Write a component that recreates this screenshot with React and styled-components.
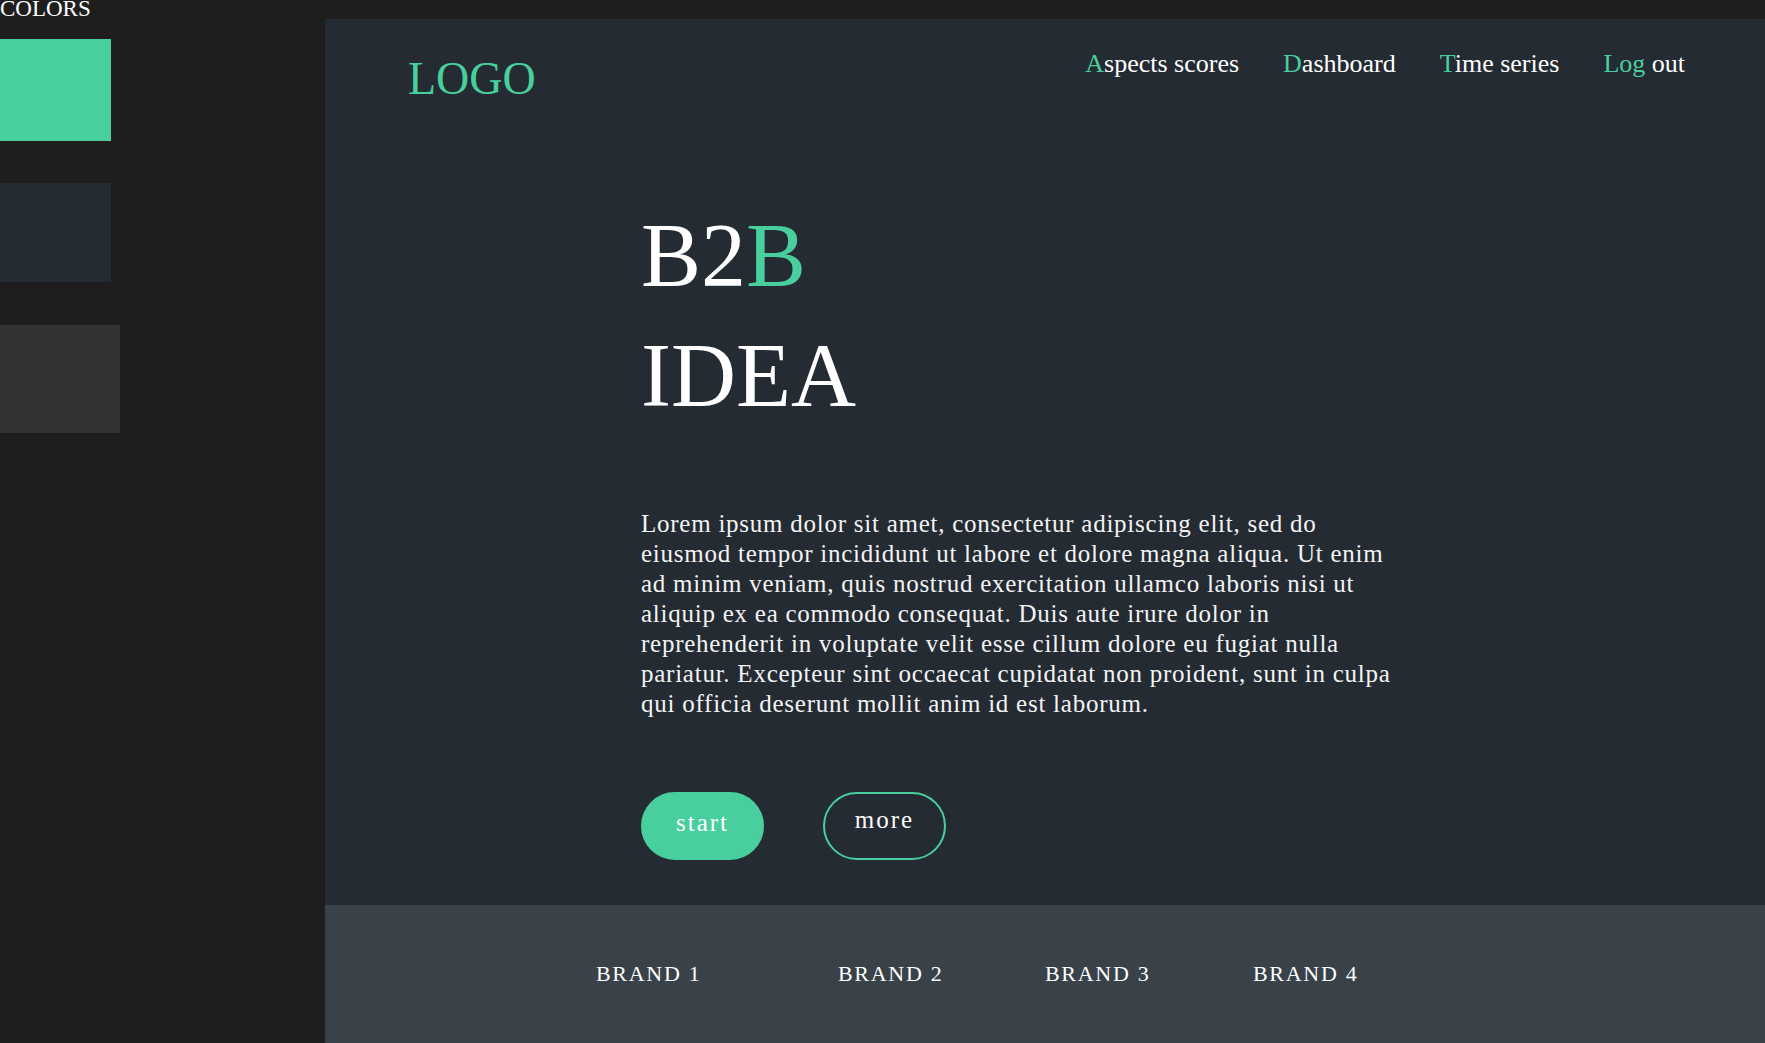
import React from 'react'
import styled, { createGlobalStyle } from 'styled-components'

const colors = {
  green: '#48cf9d',
  panel: '#242b33',
  page: '#1e1e1e',
  grey: '#333333',
  band: '#3a4249',
  text: '#ffffff',
}

const GlobalStyle = createGlobalStyle`
  html, body {
    margin: 0;
    padding: 0;
    background: ${colors.page};
    font-family: "Liberation Serif", "DejaVu Serif", serif;
    color: ${colors.text};
  }
  body { overflow: hidden; }
`

const Page = styled.div`
  display: flex;
  flex-direction: row;
  width: 1765px;
  height: 1043px;
  background: ${colors.page};
`

const Sidebar = styled.aside`
  display: flex;
  flex-direction: column;
  align-items: flex-start;
  width: 325px;
  flex-shrink: 0;
`

const SideTitle = styled.div`
  font-size: 23px;
  line-height: 18px;
  height: 39px;
  text-transform: uppercase;
`

const Swatch = styled.div`
  width: ${({ w }) => w}px;
  height: ${({ h }) => h}px;
  margin-bottom: ${({ gap }) => gap || 0}px;
  background: ${({ color }) => color};
`

const Main = styled.main`
  display: flex;
  flex-direction: column;
  flex: 1;
  margin-top: 19px;
  background: ${colors.panel};
`

const Header = styled.header`
  display: flex;
  flex-direction: row;
  justify-content: space-between;
  align-items: flex-start;
  padding: 32px 80px 0 83px;
`

const Logo = styled.div`
  margin-top: 4px;
  font-size: 46px;
  line-height: 47px;
  color: ${colors.green};
`

const Nav = styled.nav`
  display: flex;
  flex-direction: row;
  gap: 44px;
`

const NavLink = styled.a`
  font-size: 26px;
  line-height: 26px;
  color: ${colors.text};
  text-decoration: none;
  cursor: pointer;
`

const Accent = styled.span`
  color: ${colors.green};
`

const Hero = styled.section`
  display: flex;
  flex-direction: column;
  align-items: flex-start;
  flex: 1;
  padding: 94px 0 0 316px;
`

const Title = styled.h1`
  margin: 0;
  font-size: 90px;
  line-height: 120px;
  font-weight: 400;
`

const Body = styled.p`
  margin: 73px 0 0 0;
  width: 800px;
  font-size: 25px;
  line-height: 30px;
  letter-spacing: 0.75px;
  color: #f3f3f3;
`

const Actions = styled.div`
  display: flex;
  flex-direction: row;
  gap: 59px;
  margin-top: 73px;
`

const Button = styled.button`
  box-sizing: border-box;
  width: 123px;
  height: 68px;
  padding: 0 0 ${({ lift }) => lift}px 0;
  border-radius: 34px;
  border: 2px solid ${colors.green};
  background: ${({ filled }) => (filled ? colors.green : 'transparent')};
  color: ${colors.text};
  font-family: inherit;
  font-size: 25px;
  letter-spacing: 2px;
  cursor: pointer;
`

const Brands = styled.footer`
  display: grid;
  grid-template-columns: 242px 207px 208px auto;
  height: 138px;
  box-sizing: border-box;
  padding: 58px 0 0 271px;
  background: ${colors.band};
`

const Brand = styled.div`
  font-size: 22px;
  line-height: 22px;
  letter-spacing: 1.7px;
  text-transform: uppercase;
`

const links = [
  { accent: 'A', rest: 'spects scores' },
  { accent: 'D', rest: 'ashboard' },
  { accent: 'T', rest: 'ime series' },
  { accent: 'Log', rest: ' out' },
]

const lines = [
  'Lorem ipsum dolor sit amet, consectetur adipiscing elit, sed do',
  'eiusmod tempor incididunt ut labore et dolore magna aliqua. Ut enim',
  'ad minim veniam, quis nostrud exercitation ullamco laboris nisi ut',
  'aliquip ex ea commodo consequat. Duis aute irure dolor in',
  'reprehenderit in voluptate velit esse cillum dolore eu fugiat nulla',
  'pariatur. Excepteur sint occaecat cupidatat non proident, sunt in culpa',
  'qui officia deserunt mollit anim id est laborum.',
]

const brands = ['Brand 1', 'Brand 2', 'Brand 3', 'Brand 4']

export default function App() {
  return (
    <>
      <GlobalStyle />
      <Page>
        <Sidebar>
          <SideTitle>Colors</SideTitle>
          <Swatch w={111} h={102} gap={42} color={colors.green} />
          <Swatch w={111} h={99} gap={43} color={colors.panel} />
          <Swatch w={120} h={108} color={colors.grey} />
        </Sidebar>
        <Main>
          <Header>
            <Logo>LOGO</Logo>
            <Nav>
              {links.map((l) => (
                <NavLink key={l.rest}>
                  <Accent>{l.accent}</Accent>{l.rest}
                </NavLink>
              ))}
            </Nav>
          </Header>
          <Hero>
            <Title>
              B2<Accent>B</Accent>
              <br />
              IDEA
            </Title>
            <Body>
              {lines.map((line, i) => (
                <React.Fragment key={i}>
                  {line}
                  {i < lines.length - 1 && <br />}
                </React.Fragment>
              ))}
            </Body>
            <Actions>
              <Button filled lift={6}>start</Button>
              <Button lift={13}>more</Button>
            </Actions>
          </Hero>
          <Brands>
            {brands.map((b) => (
              <Brand key={b}>{b}</Brand>
            ))}
          </Brands>
        </Main>
      </Page>
    </>
  )
}
